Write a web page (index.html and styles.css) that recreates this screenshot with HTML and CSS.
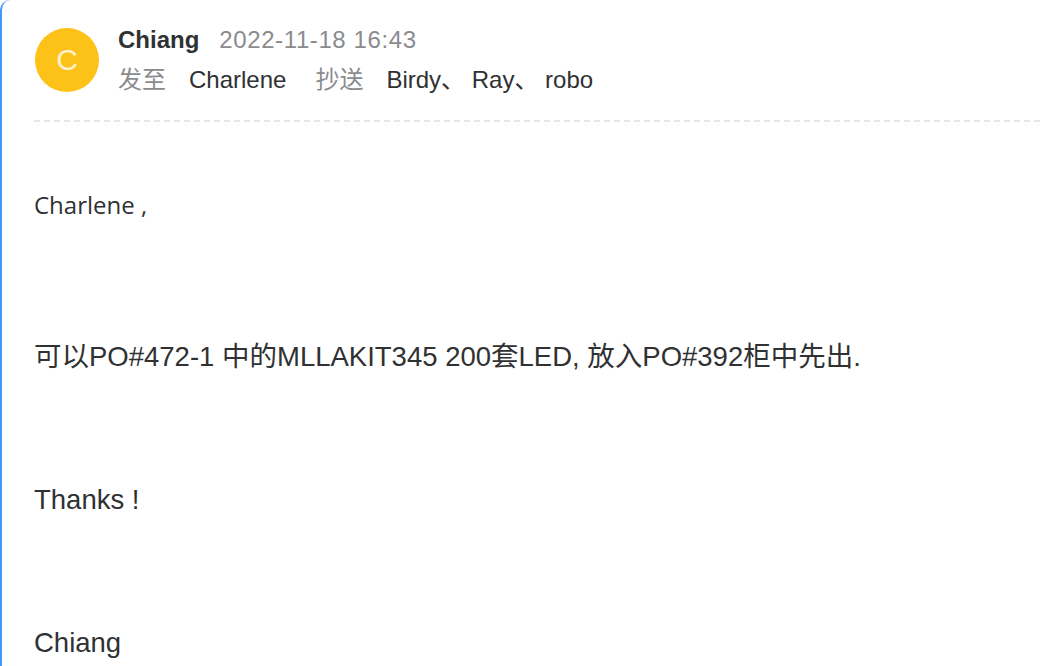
FILE: index.html
```html
<!DOCTYPE html>
<html lang="zh-CN">
<head>
<meta charset="utf-8">
<title>Mail</title>
<link rel="stylesheet" href="styles.css">
</head>
<body>
<div class="mail">
  <header class="head">
    <div class="avatar">C</div>
    <div class="meta">
      <div class="line1"><span class="sender">Chiang</span><span class="date">2022-11-18 16:43</span></div>
      <div class="line2"><span class="label">发至</span><span class="who">Charlene</span><span class="label cc">抄送</span><span class="who">Birdy、 Ray、 robo</span></div>
    </div>
  </header>
  <div class="divider"></div>
  <div class="content">
    <p class="greet">Charlene ,</p>
    <p>可以PO#472-1 中的MLLAKIT345 200套LED, 放入PO#392柜中先出.</p>
    <p>Thanks !</p>
    <p>Chiang</p>
  </div>
</div>
</body>
</html>
```
FILE: styles.css
```css
html, body {
  margin: 0;
  padding: 0;
  background: #ffffff;
}
body {
  font-family: "Liberation Sans", "Noto Sans CJK SC", sans-serif;
  color: #303133;
}
.mail {
  border-left: 2px solid #4596f7;
  border-top-left-radius: 10px;
  min-height: 666px;
  padding-left: 32px;
  box-sizing: border-box;
  overflow: hidden;
}
.head {
  display: flex;
  align-items: center;
  gap: 19px;
  padding-top: 20px;
  padding-left: 1px;
}
.avatar {
  width: 64px;
  height: 64px;
  border-radius: 50%;
  background: #fdc217;
  color: #fdf1cf;
  font-size: 30px;
  line-height: 64px;
  text-align: center;
  flex: none;
}
.meta {
  display: flex;
  flex-direction: column;
  font-size: 24px;
}
.line1, .line2 {
  height: 40px;
  line-height: 40px;
  white-space: nowrap;
}
.sender {
  font-weight: bold;
  color: #303133;
}
.date {
  margin-left: 20px;
  color: #8a8b8e;
  letter-spacing: 0.6px;
}
.label {
  color: #8a8b8e;
  margin-right: 23px;
}
.label.cc {
  margin-left: 29px;
}
.who {
  color: #303133;
}
.divider {
  margin-top: 20px;
  height: 2px;
  background: repeating-linear-gradient(90deg, #e6e6e6 0 6px, transparent 6px 10px);
}
.content {
  display: flex;
  flex-direction: column;
  gap: 103px;
  padding-top: 63px;
  font-size: 27.5px;
}
.content p {
  margin: 0;
  line-height: 40px;
  white-space: nowrap;
}
.content .greet {
  font-family: "Open Sans", "Noto Sans CJK SC", sans-serif;
  font-size: 24px;
  margin-bottom: 9px;
}
```
